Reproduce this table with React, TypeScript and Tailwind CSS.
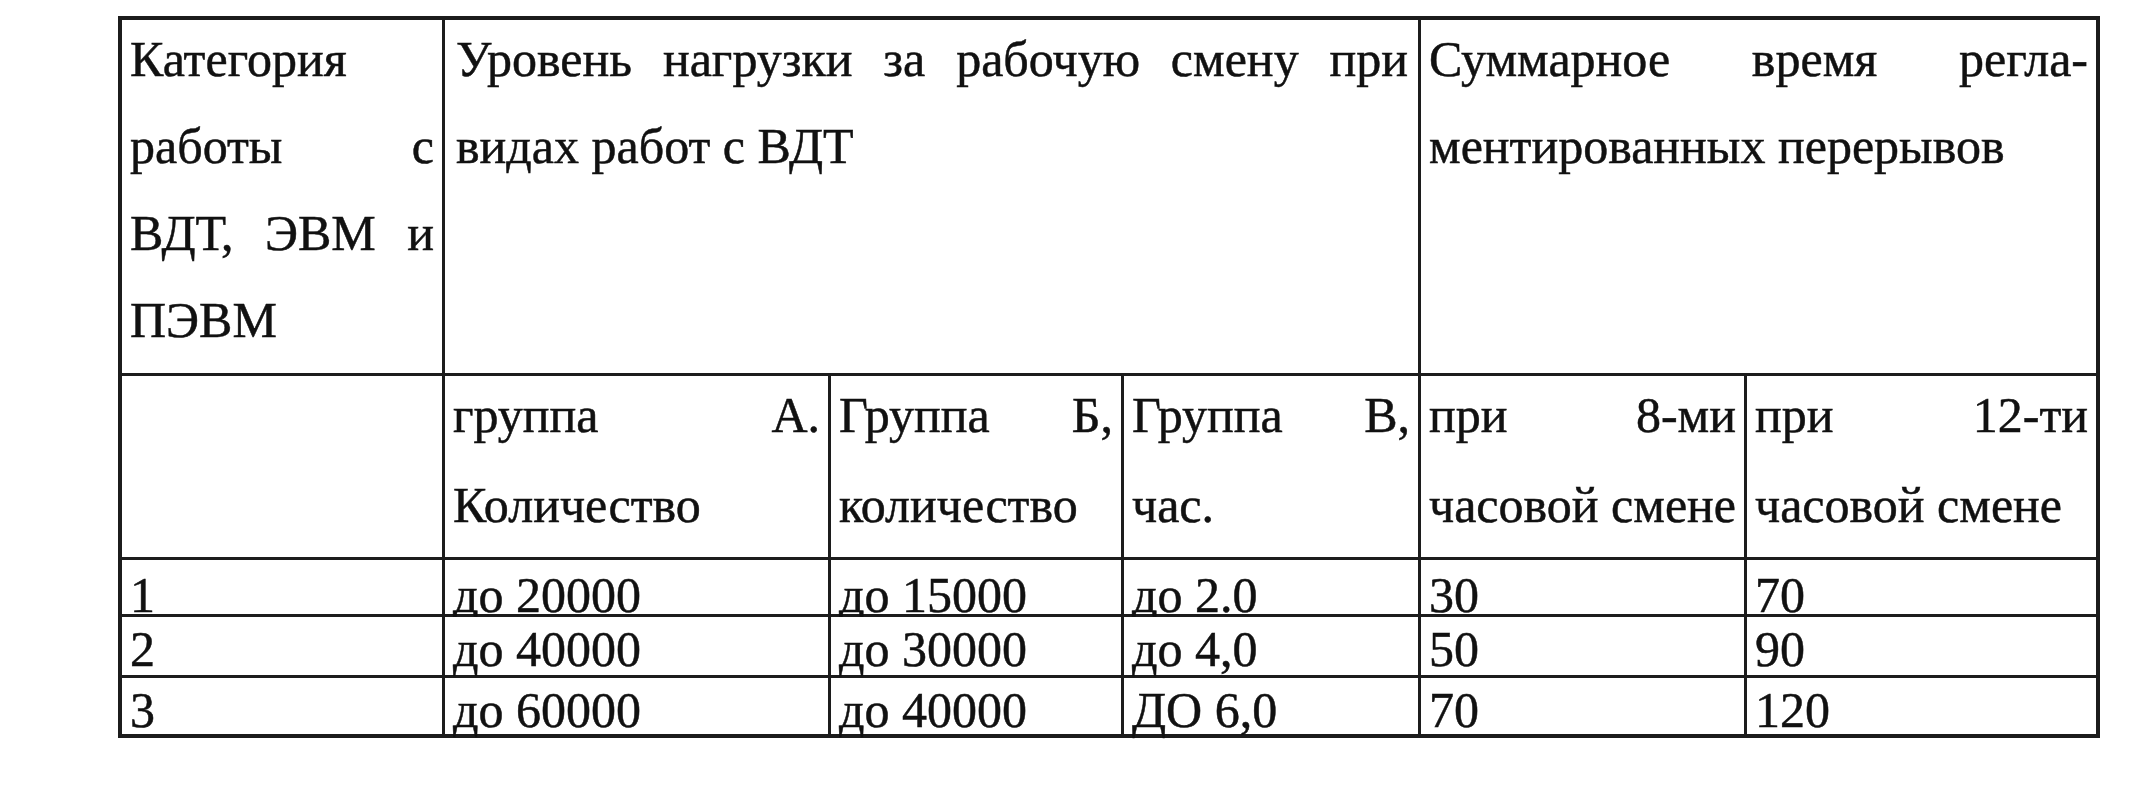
// one line of a cell; justified lines are stretched edge to edge like in Word
const Line = ({ text, justify = false }: { text: string; justify?: boolean }) => (
  <div
    className={
      justify
        ? "whitespace-nowrap text-justify [text-align-last:justify]"
        : "whitespace-nowrap"
    }
  >
    {text}
  </div>
);

const rows = [
  ["1", "до 20000", "до 15000", "до 2.0", "30", "70"],
  ["2", "до 40000", "до 30000", "до 4,0", "50", "90"],
  ["3", "до 60000", "до 40000", "ДО 6,0", "70", "120"],
];

const subHeads = [
  ["группа А.", "Количество"],
  ["Группа Б,", "количество"],
  ["Группа В,", "час."],
  ["при 8-ми", "часовой смене"],
  ["при 12-ти", "часовой смене"],
];

const App = () => {
  return (
    <div className="w-[2156px] h-[802px] bg-white overflow-hidden font-['Liberation_Serif','Times_New_Roman',serif]">
      <div className="pl-[118px] pt-[16px]">
        <div className="grid w-fit grid-cols-[320px_383px_290px_294px_323px_349px] grid-rows-[353px_181px_54px_58px_56px] gap-[3px] bg-[#1c1c1c] p-[4px] text-[50px] text-[#111] [-webkit-text-stroke:0.5px_#111]">
          {/* header row 1 */}
          <div className="bg-white px-[8px] leading-[87px]">
            <div className="-mt-[4px]">
              <Line text="Категория" />
              <Line text="работы с" justify />
              <Line text="ВДТ, ЭВМ и" justify />
              <Line text="ПЭВМ" />
            </div>
          </div>
          <div className="col-span-3 bg-white pl-[11px] pr-[10px] leading-[87px]">
            <div className="-mt-[4px]">
              <Line text="Уровень нагрузки за рабочую смену при" justify />
              <Line text="видах работ с ВДТ" />
            </div>
          </div>
          <div className="col-span-2 bg-white px-[8px] leading-[87px]">
            <div className="-mt-[4px]">
              <Line text="Суммарное время регла-" justify />
              <Line text="ментированных перерывов" />
            </div>
          </div>

          {/* header row 2 */}
          <div className="bg-white" />
          {subHeads.map(([a, b]) => (
            <div key={a} className="bg-white px-[8px] leading-[90px]">
              <div className="-mt-[6px]">
                <Line text={a} justify />
                <Line text={b} />
              </div>
            </div>
          ))}

          {/* data rows */}
          {rows.map((row, i) =>
            row.map((cell, j) => (
              <div
                key={`${i}-${j}`}
                className={`bg-white px-[8px] leading-[54px] ${i === 0 ? "pt-[8px]" : "pt-[5px]"}`}
              >
                <Line text={cell} />
              </div>
            ))
          )}
        </div>
      </div>
    </div>
  );
};

export default App;
